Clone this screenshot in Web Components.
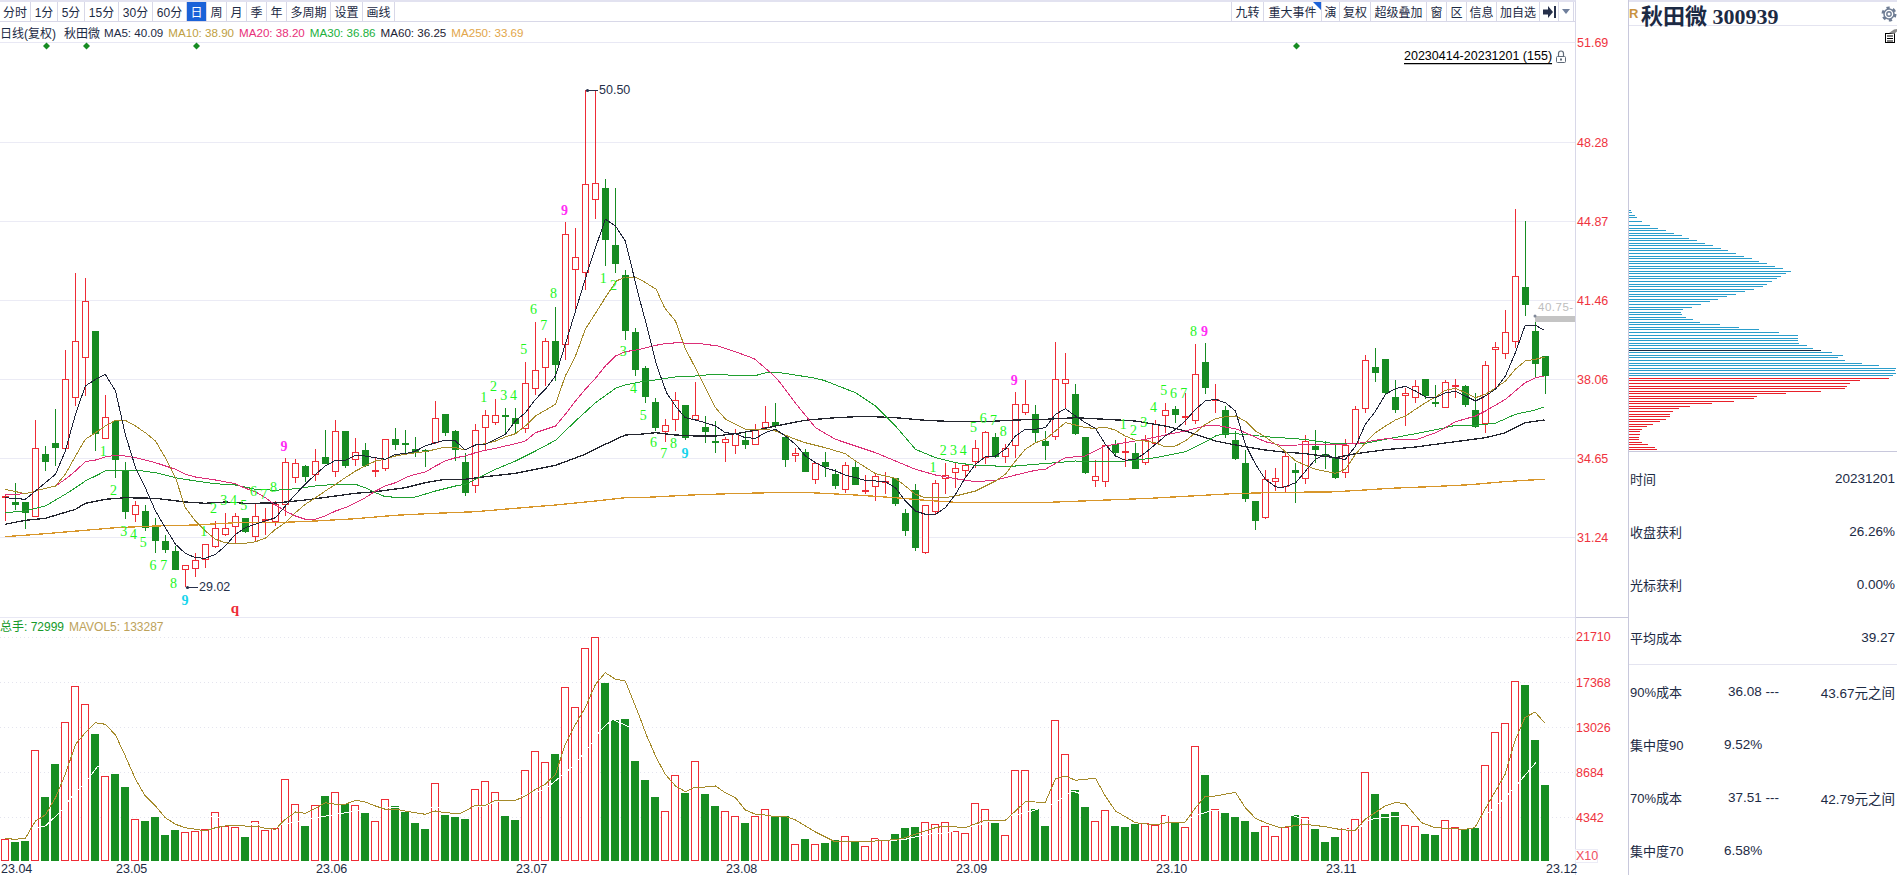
<!DOCTYPE html>
<html lang="zh">
<head>
<meta charset="utf-8">
<title>秋田微 300939</title>
<style>
    html, body { margin: 0; background: #ffffff; overflow: hidden; }
</style>
</head>
<body>
<kline-app></kline-app>

<script>
// coordinates below were read off the reference crops: [x0, y0, x scale], y scale is always 3
const Z1 = [0, 0, 2.45], Z3 = [0, 300, 2.45], Z4 = [640, 80, 2.45], Z5 = [640, 320, 2.45], Z6 = [1280, 180, 2.541];
const Z8 = [0, 610, 2.45], Z9 = [640, 610, 2.45], Z7 = [1280, 500, 2.541];

function zp(z, arr) {
    const out = [];
    for (let i = 0; i < arr.length; i += 2) {
        out.push([z[0] + arr[i] / z[2], z[1] + arr[i + 1] / 3]);
    }
    return out;
}
function line(pts, cls) {
    return `<polyline class="${cls}" points="${pts.map(p => p[0].toFixed(1) + ',' + p[1].toFixed(1)).join(' ')}"/>`;
}

// colour high top bottom low, one candle per day, x = 5 + 10 * index
const CANDLES = `r493,495,497,520 g482,501,504,509 g501,501,512,528 r419,447,516,516 g445,453,461,470 g408,442,447,465 r349,378,448,449 r272,340,397,405 r277,300,357,395 g330,330,433,450
r394,416,438,438 g420,420,459,477 g461,469,511,518 r500,504,514,521 g504,510,527,530 g517,526,540,552 g534,540,549,552 g545,550,569,569 r564,564,569,586 r552,559,568,576
r543,543,559,567 r520,527,546,547 r512,527,534,535 r512,515,526,542 g517,517,531,532 r503,515,536,540 r507,518,520,534 r500,503,521,525 r457,461,504,515 r458,462,477,482
g464,465,476,481 r448,460,474,480 g429,456,463,463 r419,430,471,476 g430,430,465,467 r437,451,459,465 g442,449,465,466 r457,469,470,476 r438,438,468,470 g427,438,444,449
g429,442,443,454 g436,448,452,456 g448,449,450,466 r400,417,442,443 g413,413,432,435 g429,430,449,460 g452,461,492,495 r423,429,485,492 r409,414,427,450 r398,414,422,424
g407,414,415,432 g407,417,423,432 r361,382,428,432 r321,369,388,394 r337,340,367,385 g306,340,364,380 r221,233,344,359 r227,256,269,308 r89,183,272,289 r89,182,199,218
g178,187,239,265 g187,244,263,272 g269,274,330,339 g327,331,369,375 g365,367,396,402 g397,401,427,430 r418,424,431,441 r391,399,419,430 g404,404,437,439 r381,414,419,419
g415,426,431,442 g420,440,442,452 r436,438,442,461 r428,432,445,453 g430,439,444,448 r423,428,444,444 r405,421,427,428 g402,421,425,427 g435,436,459,466 r447,452,455,461
g448,451,471,471 r462,462,479,483 g451,461,466,476 g468,473,485,488 r461,464,489,492 g460,466,484,484 r474,489,490,493 r473,475,486,500 r471,480,481,493 g477,477,503,505
g508,512,530,535 g483,489,547,550 r504,504,552,553 r479,482,511,513 r462,474,478,493 r462,467,472,487 r463,464,470,477 r439,447,461,467 r430,431,457,463 g432,436,456,457
r443,447,456,462 r391,403,445,457 r379,403,412,414 g404,413,432,442 g430,440,445,459 r341,378,436,439 r352,378,383,407 g383,393,433,434 g436,436,472,473 r459,475,480,486
r444,444,481,486 g439,443,452,455 r437,450,451,466 g442,452,468,468 r434,439,462,464 r419,423,443,444 r402,409,415,432 g405,408,414,422 r392,415,416,424 r343,373,420,423
g342,361,387,393 r383,398,400,412 g405,409,434,437 g430,439,458,459 g449,462,498,501 g500,500,520,529 r469,478,517,518 r467,477,481,490 r450,455,486,492 g462,469,472,502
r434,440,478,483 g429,445,449,462 g440,453,454,468 g443,457,477,478 r438,444,472,477 r405,408,443,444 r354,359,408,412 g347,366,372,381 g358,358,392,393 g379,396,409,412
r387,392,395,425 r379,385,397,402 g378,378,395,398 g384,401,403,406 r379,381,407,407 r378,384,386,397 g384,385,404,406 g392,409,426,427 r360,364,423,432 r341,346,349,388
r309,331,353,358 r208,275,341,347 g220,286,304,315 g315,330,363,377 g355,355,375,393`;

// volume bar tops as read in the crops
const VOL_A = `r685 g693 g690 r418 g558 g459 r334 r226 r280 g369 r496 g489 g528 r625 g630 g618 g672 g657 r664 r661 r655 r604 r645 r649 g678 r631 r658 r650 r505 r580 g645 r583 g555 r544 g580 r583 g606 r631 r565 g585 g603 g636 g654 r517 g612 g618 g624 r535 r511 r544 g615 g627 r478 r421 r454 g429 r229 r289 r112 r79 g216 g327 g324 g450
g507 g558 r601 r493 g546 r451 g549 g585 r601 r616 g636 r616 r595 g616 g616 r700 g684 r700 g696 g688 r676 g692 r706 r682 r688 g669 g651 g648 r634 r640 r634 r661 r667 r577 r595 g636 r673 r478 r478 g594 g645 r328 r430 g537 g588 r631 r598 g645 g648 g639 r636 r642 r613 g635 r649 r406 g492 r595 g606 g618 g630 g663 r646 r676`;
const VOL_B = `r979 g942 r949 g984 g1023 g1008 r982 r955 r814 g879 g939 g933 r973 r976 g999 g1002 r958 r979 g985 g981 r793 r694 r667 r541 g552 g717 g852`;

const MA = {
    ma5: [...zp(Z3, [12,590,62,595,87,570,136,520,160,450,185,340,209,255,234,235,258,220,283,270,307,400,332,500,356,560,381,630,405,680,430,730,454,757,479,770,503,772,528,760,552,735,577,700,601,680,626,670,650,660,675,650,699,615,724,580,748,550,773,520,797,495,822,478,846,478,871,463,895,465,920,470,944,475,969,460,993,458,1018,450,1042,435,1067,425,1091,418,1116,420,1140,447,1165,432,1189,430,1214,415,1238,400,1263,360,1287,335,1312,295,1336,265,1361,225,1385,130,1410,30]),
        ...zp(Z1, [1445,790,1483,655,1508,675,1532,720,1567,895]),
        ...zp(Z5, [18,20,40,130,65,215,90,260,111,290,136,297,160,305,185,315,209,335,234,338,258,350,283,352,307,335,332,325,356,345,381,370,405,405,430,425,454,440,479,450,503,462,528,470,552,478,577,480,601,482,626,500,650,540,675,570,699,580,724,580,748,560,773,520,797,470,822,430,846,408,871,405,895,385,920,345,944,325,969,325,993,320,1018,280,1042,263,1067,285,1091,305,1116,322,1140,370,1165,405,1189,418,1214,415,1238,395,1263,370,1287,345,1312,325,1336,300,1361,265,1385,240,1410,235,1434,245,1459,270,1483,370,1508,430,1532,475,1557,497,1568,500]),
        ...zp(Z6, [14,917,40,905,65,870,90,835,115,820,141,832,166,835,192,795,217,730,243,690,268,640,293,623,319,616,344,630,370,648,395,650,420,636,446,631,471,645,497,660,522,645,547,625,573,585,598,515,623,433,649,433,672,448])],
    ma10: [...zp(Z3, [12,565,62,578,87,570,136,555,160,520,185,465,209,415,234,395,258,375,283,358,307,358,332,375,356,395,381,420,405,470,430,530,454,620,479,660,503,690,528,715,552,725,577,728,601,727,626,722,650,712,675,685,699,665,724,635,748,610,773,590,797,570,822,550,846,530,871,510,895,495,920,480,944,475,969,465,993,460,1018,455,1042,452,1067,445,1091,438,1116,440,1140,447,1165,432,1189,428,1214,420,1238,408,1263,398,1287,375,1312,345,1361,310,1385,225,1410,165,1434,85,1478,0]),
        ...zp(Z1, [1480,895,1510,840,1532,828,1560,830]),
        ...zp(Z4, [0,595,40,625,60,680,87,720]),
        ...zp(Z5, [110,80,148,170,185,260,210,295,258,325,307,325,332,330,381,355,405,365,454,380,503,398,528,420,577,458,626,472,650,495,675,520,699,530,724,530,748,530,773,525,822,510,871,480,895,460,920,420,944,385,969,365,993,355,1018,330,1042,305,1067,312,1091,320,1116,322,1140,318,1165,328,1189,345,1214,358,1238,360,1263,365,1287,378,1312,375,1336,360,1361,335,1385,310,1410,293,1434,287,1459,285,1483,300,1508,330,1532,348,1557,370,1568,378]),
        ...zp(Z6, [40,840,90,865,141,877,166,865,192,820,217,785,243,755,268,735,293,717,319,705,344,685,370,665,395,648,420,628,446,622,471,635,497,650,522,640,547,622,573,600,598,565,623,540,649,535,672,528])],
    ma20: [...zp(Z3, [12,582,62,578,87,570,136,555,160,535,185,510,209,482,234,477,258,468,283,463,307,465,332,470,381,485,430,505,454,520,479,528,528,537,577,548,601,562,626,572,650,590,675,612,699,630,724,645,748,655,773,655,797,645,822,630,846,620,871,605,895,590,920,570,944,555,969,545,993,530,1018,520,1042,513,1067,495,1091,480,1116,470,1140,465,1165,455,1189,448,1214,442,1238,435,1263,428,1287,420,1312,395,1361,375,1385,340,1410,300,1434,265,1459,232,1483,195,1508,165,1532,152,1568,145]),
        ...zp(Z4, [50,790,90,785,150,788,190,795,240,815,280,833,320,875,338,897]),
        ...zp(Z5, [380,245,430,320,479,355,528,375,577,395,626,420,675,445,724,462,773,473,822,482,871,478,920,462,969,448,993,445,1042,410,1091,405,1140,375,1189,365,1238,355,1287,342,1336,330,1385,315,1410,313,1459,323,1483,335,1532,362,1568,373]),
        ...zp(Z6, [150,790,192,788,243,778,268,773,344,777,395,755,420,740,446,722,497,705,522,690,573,655,598,630,623,605,649,590,672,585])],
    ma30: [...zp(Z3, [12,635,62,630,111,615,160,580,185,560,209,540,234,525,258,510,283,507,332,507,381,515,430,530,479,540,528,548,577,552,626,565,675,568,724,563,773,555,822,550,871,550,895,560,920,575,944,587,993,590,1018,588,1067,570,1116,555,1140,550,1165,535,1214,505,1263,480,1312,450,1361,418,1410,360,1459,305,1508,262,1532,252,1568,243]),
        ...zp(Z4, [50,895,85,888,120,887,148,883,195,880,225,883,285,883,310,875,330,873,370,880,400,886,430,892,450,898]),
        ...zp(Z5, [528,215,577,255,626,315,675,385,724,410,773,425,822,433,871,435,920,435,969,430,1018,425,1067,420,1116,422,1165,422,1214,418,1263,410,1336,392,1385,363,1410,345,1434,337,1483,340,1532,347,1568,350]),
        ...zp(Z6, [60,775,141,788,217,787,268,775,344,758,420,740,446,733,497,733,547,727,598,700,649,687,672,677])],
    ma60: [...zp(Z3, [12,670,62,658,111,652,185,625,209,607,258,595,307,590,381,592,454,603,503,607,552,603,601,607,675,606,748,597,822,585,871,577,920,572,993,560,1042,545,1091,535,1140,535,1189,527,1263,517,1361,493,1434,460,1483,430,1532,402,1568,400]),
        ...zp(Z5, [38,335,87,342,136,345,185,345,234,338,283,328,332,315,405,298,479,290,552,286,626,290,699,298,773,302,846,302,920,297,993,295,1067,290,1140,295,1214,300,1287,315,1336,330,1410,360,1459,372,1532,387,1568,392]),
        ...zp(Z6, [65,818,141,830,192,818,268,806,344,798,420,786,522,770,573,755,623,725,672,717])],
    ma250: [...zp(Z3, [12,707,111,698,209,688,283,680,381,675,479,672,577,665,675,665,773,660,871,653,969,643,1067,637,1165,632,1263,622,1361,612,1459,600,1532,590,1568,590]),
        ...zp(Z5, [124,522,220,518,320,515,420,515,528,522,626,530,699,538,773,544,1003,544,1127,538,1250,532,1350,525,1450,518,1568,514]),
        ...zp(Z6, [127,933,203,928,280,922,380,917,483,911,560,903,623,898,672,895])]
};

const MAVOL = [...zp(Z8, [12,682,35,685,62,682,87,630,111,612,136,560,160,490,185,400,209,365,234,335,258,340,283,372,307,435,332,505,356,555,381,585,405,620,430,640,454,650,479,655,503,660,528,650,552,645,577,643,601,645,626,645,650,652,675,655,699,625,724,603,748,607,773,592,797,575,822,580,846,580,871,568,895,573,920,585,944,595,969,595,993,600,1018,605,1042,610,1067,600,1091,605,1127,608,1165,583,1189,583,1214,568,1263,568,1287,555,1312,535,1336,520,1361,490,1385,400,1410,340,1434,290,1459,220,1483,185,1508,205,1532,210,1568,320]),
    ...zp(Z9, [15,370,40,440,62,490,87,525,111,542,136,528,160,528,185,525,209,545,234,560,258,597,283,610,307,612,332,617,356,616,381,627,430,663,479,693,503,691,552,691,577,690,601,688,626,686,650,680,699,660,724,650,748,645,797,650,822,638,846,628,895,628,920,600,944,572,993,574,1018,503,1042,495,1067,508,1116,502,1140,555,1165,600,1214,635,1263,642,1287,636,1336,633,1361,590,1385,556,1410,555,1459,544,1483,590,1508,622,1532,635,1568,650]),
    ...zp(Z7, [64,970,115,977,150,985,190,990,216,955,267,915,292,905,318,907,360,965,394,980,470,985,495,980,521,925,572,820,597,720,622,650,648,633,672,665])];

// white MAVOL10 line, only visible where it crosses a bar
const MAVOL10 = [...zp(Z8, [87,650,111,645,150,600,175,558,209,515,240,465,272,470,400,590,620,640,690,640,800,615,920,590,1165,590,1336,535,1370,500,1400,470,1445,405,1470,360,1500,325]),
    ...zp(Z9, [600,690,650,685,700,670,750,665,820,645,890,620,960,600,1010,580,1060,540,1200,600,1350,620,1400,598]),
    ...zp(Z7, [20,940,50,950,190,990,230,955,300,945,521,945,572,890,610,840,650,785])];

// turn-count digits over the candles: text, zoomed x, zoomed y, class
const TD = [
    [Z3, [['1',253,450],['2',278,568],['3',303,690],['4',327,700],['5',351,725],['6',375,793],['7',401,792],['8',425,847],['9',453,897,'c'],
          ['1',499,690],['2',523,622],['3',548,597],['4',572,597],['5',597,612],['6',621,570],['7',646,580],['8',670,560],['9',696,436,'m'],
          ['1',1185,288],['2',1209,255],['3',1234,283],['4',1258,283],['5',1283,144],['6',1307,24],['7',1332,72],['3',1527,152],['4',1552,262]]],
    [Z1, [['8',1356,878],['9',1383,628,'m'],['1',1478,831],['2',1503,852]]],
    [Z5, [['5',8,282],['6',33,363],['7',58,398],['8',82,367],['9',110,398,'c'],['1',718,438],['2',743,388],['3',768,388],['4',792,388],['5',817,318],['6',841,292],['7',866,297],['8',890,330],['9',917,178,'m'],
          ['1',1184,310],['2',1209,327],['3',1234,303],['4',1258,260],['5',1283,207],['6',1307,217],['7',1332,217],['8',1356,30],['9',1383,30,'m']]]
];

// chip distribution rows: zoomed y, zoomed right end
const CHIPS = [91,888,97,892,104,898,111,905,122,918,136,938,145,958,151,978,160,998,166,1018,175,1037,181,1057,189,1078,196,1098,204,1118,211,1136,220,1156,229,1177,235,1197,244,1215,250,1235,259,1255,265,1276,273,1296,280,1283,288,1271,295,1261,303,1248,312,1235,318,1225,327,1202,334,1178,343,1156,349,1133,357,1111,364,1090,373,1067,382,1044,388,1022,397,1017,403,1019,411,1029,418,1047,427,1065,433,1116,441,1164,448,1215,456,1266,465,1314,473,1314,480,1314,488,1315,495,1337,503,1352,511,1372,517,1400,525,1428,531,1414,540,1433,549,1477,556,1520,564,1563,571,1560,579,1563,586,1555,594,1545,601,1471,610,1446,618,1437,625,1433,633,1372,640,1283,648,1210,655,1202,663,1151,670,1095,678,1039,685,1011,693,996,702,987,708,989,717,978,724,963,732,945,739,930,747,917,754,911,762,911,770,910,777,910,786,917,793,933,801,950,808,956];

class ToolBtn extends HTMLElement {
    constructor() {
        super();
        this.shadow = this.attachShadow({mode: 'open'});
    }

    connectedCallback() {
        this.shadow.innerHTML = `
        <style>
        :host {
            display: flex;
            align-items: center;
            justify-content: center;
            position: relative;
            box-sizing: border-box;
            width: var(--w);
            height: 19px;
            border-right: 1px solid #d8d8e8;
            color: #1c2a44;
            font-size: 12px;
            white-space: nowrap;
        }
        :host([active]) {
            background: #1b62d8;
            color: #ffffff;
        }
        :host([flag])::after {
            content: "";
            position: absolute;
            top: 0;
            right: 0;
            width: 8px;
            height: 8px;
            background: #1b62d8;
            clip-path: polygon(0 0, 100% 0, 100% 100%);
        }
        </style>
        <slot></slot>`;
    }
}

class KlineToolbar extends HTMLElement {
    constructor() {
        super();
        this.shadow = this.attachShadow({mode: 'open'});
    }

    connectedCallback() {
        const left = [['分时',31],['1分',27],['5分',27],['15分',34],['30分',34],['60分',34],['日',20],['周',20],['月',20],['季',20],['年',20],['多周期',44],['设置',32],['画线',32]];
        const right = [['九转',32],['重大事件',58],['演',18],['复权',31],['超级叠加',56],['窗',20],['区',20],['信息',30],['加自选',43]];
        this.shadow.innerHTML = `
        <style>
        :host {
            display: flex;
            justify-content: space-between;
            box-sizing: border-box;
            height: 22px;
            width: 1576px;
            padding: 0 1px 0 0;
            border-top: 2px solid #e2e2f0;
            border-bottom: 1px solid #d8d8e8;
            border-right: 1px solid #d8d8e8;
            font-family: "Liberation Sans", "Noto Sans CJK SC", sans-serif;
        }
        .group { display: flex; }
        .right { border-left: 1px solid #d8d8e8; }
        </style>
        <div class="group">
            ${left.map(b => `<tool-btn style="--w:${b[1]}px"${b[0] === '日' ? ' active' : ''}>${b[0]}</tool-btn>`).join('')}
        </div>
        <div class="group right">
            ${right.map(b => `<tool-btn style="--w:${b[1]}px"${b[0] === '重大事件' ? ' flag' : ''}>${b[0]}</tool-btn>`).join('')}
            <tool-btn style="--w:19px">
                <svg width="13" height="12" viewBox="0 0 13 12"><path d="M0 3.500h5V0l5 6-5 6V8.500H0z" fill="#26304a"/><rect x="11" y="0" width="2" height="12" fill="#26304a"/></svg>
            </tool-btn>
            <tool-btn style="--w:15px">
                <svg width="8" height="5" viewBox="0 0 8 5"><path d="M0 0h8L4 5z" fill="#6f7f9c"/></svg>
            </tool-btn>
        </div>`;
    }
}

class MaLegend extends HTMLElement {
    constructor() {
        super();
        this.shadow = this.attachShadow({mode: 'open'});
    }

    connectedCallback() {
        this.shadow.innerHTML = `
        <style>
        :host {
            display: flex;
            align-items: center;
            box-sizing: border-box;
            height: 21px;
            width: 1576px;
            border-bottom: 1px solid #e8e8f4;
            border-right: 1px solid #d8d8e8;
            font: 12px "Liberation Sans", "Noto Sans CJK SC", sans-serif;
            color: #1c2a44;
            white-space: nowrap;
        }
        span { margin-right: 5px; }
        .name { margin-right: 8px; }
        .ma { font-size: 11.6px; }
        </style>
        <span class="name">日线(复权)</span>
        <span style="margin-right:4px">秋田微</span>
        <span class="ma" style="color:#1c2a44">MA5: 40.09</span>
        <span class="ma" style="color:#c0a042">MA10: 38.90</span>
        <span class="ma" style="color:#e8307a">MA20: 38.20</span>
        <span class="ma" style="color:#22b03c">MA30: 36.86</span>
        <span class="ma" style="color:#1c2233">MA60: 36.25</span>
        <span class="ma" style="color:#e2a64a">MA250: 33.69</span>`;
    }
}

class PricePane extends HTMLElement {
    constructor() {
        super();
        this.shadow = this.attachShadow({mode: 'open'});
    }

    connectedCallback() {
        this.render();
    }

    render() {
        const grid = [[42, '51.69'], [141.5, '48.28'], [220.5, '44.87'], [299.5, '41.46'], [378.5, '38.06'], [457.5, '34.65'], [536.5, '31.24']];
        const bodies = CANDLES.trim().split(/\s+/).map((s, i) => {
            const c = s[0];
            const [h, t, b, l] = s.slice(1).split(',').map(Number);
            const x = 5 + 10 * i;
            if (c === 'g') {
                return `<rect class="gf" x="${x}" y="${h}" width="1" height="${l - h}"/>` +
                    `<rect class="gf" x="${x - 3}" y="${t}" width="7" height="${Math.max(b - t, 2)}"/>`;
            }
            return `<rect class="rf" x="${x}" y="${h}" width="1" height="${t - h}"/>` +
                `<rect class="rf" x="${x}" y="${b}" width="1" height="${l - b}"/>` +
                `<rect class="rb" x="${x - 2.5}" y="${t + .5}" width="6" height="${Math.max(b - t - 1, 1)}"/>`;
        }).join('');
        const digits = TD.map(([z, items]) => items.map(d => {
            const p = zp(z, [d[1], d[2]])[0];
            return `<text class="td ${d[3] || ''}" x="${p[0].toFixed(1)}" y="${p[1].toFixed(1)}">${d[0]}</text>`;
        }).join('')).join('');
        const diamonds = [46.5, 86.5, 196.5, 1296.5].map(x =>
            `<polygon class="dia" points="${x},41.5 ${x + 1.5},43 ${x + 3.5},45 ${x + 1.5},47 ${x},48.5 ${x - 1.5},47 ${x - 3.5},45 ${x - 1.5},43"/>`).join('');

        this.shadow.innerHTML = `
        <style>
        :host {
            display: block;
            height: 574px;
            width: 1628px;
        }
        svg { display: block; overflow: visible; }
        text { font-family: "Liberation Sans", sans-serif; }
        .grid { stroke: #ebebf5; stroke-width: 1; shape-rendering: crispEdges; }
        .axis { stroke: #d8d8e8; stroke-width: 1; shape-rendering: crispEdges; }
        .price { fill: #ef3340; font-size: 12.5px; }
        .gf { fill: #178c22; shape-rendering: crispEdges; }
        .rf { fill: #ee2c36; shape-rendering: crispEdges; }
        .rb { fill: #ffffff; stroke: #ee2c36; stroke-width: 1; shape-rendering: crispEdges; }
        polyline { fill: none; stroke-width: 1; shape-rendering: crispEdges; }
        .ma5 { stroke: #1f2438; }
        .ma10 { stroke: #a58a2a; }
        .ma20 { stroke: #dc2f78; }
        .ma30 { stroke: #20a030; }
        .ma60 { stroke: #23252e; stroke-width: 1.3; }
        .ma250 { stroke: #d8962a; stroke-width: 1.3; }
        .td { font-family: "Liberation Serif", serif; font-size: 14px; fill: #1ef51e; text-anchor: middle; dominant-baseline: central; }
        .td.m { fill: #ff2cf4; font-weight: bold; }
        .td.c { fill: #18d4ec; font-weight: bold; }
        .q { font-family: "Liberation Serif", serif; font-size: 15px; font-weight: bold; fill: #ee2c36; text-anchor: middle; dominant-baseline: central; }
        .mark { fill: #26304a; font-size: 12.5px; dominant-baseline: central; }
        .mline { stroke: #26304a; stroke-width: 1; shape-rendering: crispEdges; }
        .range { fill: #000000; font-size: 12.5px; text-decoration: underline; dominant-baseline: central; }
        .dia { fill: #178c22; }
        .last { fill: #bdbdbd; font-size: 11.5px; letter-spacing: .5px; dominant-baseline: central; }
        </style>
        <svg width="1628" height="574" viewBox="0 42 1628 574">
            ${grid.slice(1).map(g => `<line class="grid" x1="0" x2="1575" y1="${g[0]}" y2="${g[0]}"/>`).join('')}
            <line class="axis" x1="1575.5" x2="1575.5" y1="42" y2="616"/>
            ${grid.map(g => `<text class="price" x="1577" y="${g[0] + 4}">${g[1]}</text>`).join('')}
            ${bodies}
            ${line(MA.ma250, 'ma250')}
            ${line(MA.ma60, 'ma60')}
            ${line(MA.ma30, 'ma30')}
            ${line(MA.ma20, 'ma20')}
            ${line(MA.ma10, 'ma10')}
            ${line(MA.ma5, 'ma5')}
            ${digits}
            <text class="q" x="235" y="607">q</text>
            ${diamonds}
            <line class="mline" x1="587" x2="598" y1="89.5" y2="89.5"/>
            <circle cx="587.5" cy="89.5" r="1.6" fill="#26304a"/>
            <text class="mark" x="599" y="88.5">50.50</text>
            <line class="mline" x1="187" x2="198" y1="586.5" y2="586.5"/>
            <circle cx="187.5" cy="586.5" r="1.6" fill="#26304a"/>
            <text class="mark" x="199" y="585.5">29.02</text>
            <text class="range" x="1404" y="55">20230414-20231201 (155)</text>
            <path d="M1558.500 55v-2.500a2.500 2.500 0 0 1 5 0V55" fill="none" stroke="#5f6a78" stroke-width="1.200"/>
            <rect x="1556.500" y="55.500" width="9" height="6" rx="1" fill="none" stroke="#5f6a78"/>
            <rect x="1560" y="57.500" width="2" height="2" fill="#5f6a78"/>
            <rect x="1535" y="315" width="40" height="6" fill="#c4c4c4"/>
            <circle cx="1535" cy="315" r="1.500" fill="#808898"/>
            <text class="last" x="1538" y="305.500">40.75-</text>
        </svg>`;
    }
}

class VolumePane extends HTMLElement {
    constructor() {
        super();
        this.shadow = this.attachShadow({mode: 'open'});
    }

    connectedCallback() {
        this.render();
    }

    render() {
        const rows = [[636, '21710'], [681.5, '17368'], [726.5, '13026'], [771.5, '8684'], [816.5, '4342']];
        const dates = [[1, '23.04'], [116, '23.05'], [316, '23.06'], [516, '23.07'], [726, '23.08'], [956, '23.09'], [1156, '23.10'], [1326, '23.11'], [1546, '23.12']];
        const tops = [
            ...VOL_A.trim().split(/\s+/).map(s => [s[0], 610 + Number(s.slice(1)) / 3]),
            ...VOL_B.trim().split(/\s+/).map(s => [s[0], 500 + Number(s.slice(1)) / 3])
        ];
        const bars = tops.map((b, i) => {
            const t = Math.round(b[1]);
            if (b[0] === 'g') {
                return `<rect class="gb" x="${1 + 10 * i}" y="${t}" width="8" height="${860 - t}"/>`;
            }
            return `<rect class="rb" x="${1.5 + 10 * i}" y="${t + .5}" width="7" height="${859 - t}"/>`;
        }).join('');

        this.shadow.innerHTML = `
        <style>
        :host {
            display: block;
            height: 259px;
            width: 1628px;
        }
        svg { display: block; }
        text { font-family: "Liberation Sans", "Noto Sans CJK SC", sans-serif; }
        .sep { stroke: #e8e8f4; shape-rendering: crispEdges; }
        .sep2 { stroke: #c8c8dc; shape-rendering: crispEdges; }
        .axis { stroke: #d8d8e8; shape-rendering: crispEdges; }
        .dot { stroke: #e4e4ee; stroke-dasharray: 1 3; shape-rendering: crispEdges; }
        .vol { fill: #ef3340; font-size: 12.5px; }
        .gb { fill: #188e22; shape-rendering: crispEdges; }
        .rb { fill: #ffffff; stroke: #ee2c36; stroke-width: 1; shape-rendering: crispEdges; }
        polyline { fill: none; stroke-width: 1; shape-rendering: crispEdges; }
        .mavol { stroke: #a58a2a; }
        .mavol10 { stroke: #ffffff; }
        .date { fill: #1c2a44; font-size: 12.5px; }
        .h1 { fill: #169a2a; font-size: 12px; }
        .h2 { fill: #bda25a; font-size: 12px; }
        .x10 { fill: #ef5060; font-size: 12.5px; }
        .x10box { fill: none; stroke: #ececf6; shape-rendering: crispEdges; }
        </style>
        <svg width="1628" height="259" viewBox="0 616 1628 259">
            <line class="sep" x1="0" x2="1575" y1="616" y2="616"/>
            <line class="sep2" x1="1575" x2="1628" y1="616" y2="616"/>
            <line class="axis" x1="1575.5" x2="1575.5" y1="616" y2="875"/>
            ${rows.map(r => `<line class="dot" x1="0" x2="1575" y1="${r[0]}" y2="${r[0]}"/>`).join('')}
            ${rows.map(r => `<text class="vol" x="1576" y="${r[0] + 4}">${r[1]}</text>`).join('')}
            <rect class="x10box" x="1575.5" y="848.5" width="22" height="13"/>
            <text class="x10" x="1576" y="859">X10</text>
            <text class="h1" x="0" y="629.5">总手: 72999</text>
            <text class="h2" x="69" y="629.5">MAVOL5: 133287</text>
            ${bars}
            ${line(MAVOL10, 'mavol10')}
            ${line(MAVOL, 'mavol')}
            ${dates.map(d => `<text class="date" x="${d[0]}" y="872">${d[1]}</text>`).join('')}
        </svg>`;
    }
}

class ChipProfile extends HTMLElement {
    constructor() {
        super();
        this.shadow = this.attachShadow({mode: 'open'});
    }

    connectedCallback() {
        let bars = '';
        for (let i = 0; i < CHIPS.length; i += 2) {
            const y = Math.round(180 + CHIPS[i] / 3);
            const w = (CHIPS[i + 1] - 884) / 2.541;
            const cls = CHIPS[i] === 511 ? 'now' : CHIPS[i] < 590 ? 'up' : 'dn';
            bars += `<rect class="${cls}" x="1628" y="${y}" width="${w.toFixed(1)}" height="1"/>`;
        }
        this.shadow.innerHTML = `
        <style>
        :host {
            display: block;
            height: 426px;
            box-sizing: border-box;
            border-bottom: 1px solid #c8c8dc;
        }
        svg { display: block; }
        rect { shape-rendering: crispEdges; }
        .up { fill: #2a9dcb; }
        .dn { fill: #e8202a; }
        .now { fill: #1c2a44; }
        </style>
        <svg width="268" height="425" viewBox="1628 26 268 425">
            ${bars}
            <g transform="translate(1884 29)">
                <rect x="0.5" y="4.500" width="9" height="9" fill="#ffffff" stroke="#000000"/>
                <path d="M2 7h6M2 9.500h6M2 12h6" stroke="#000000" fill="none"/>
                <path d="M4 4L9 0.500 12 0v2.500L9 5z" fill="#8c8c8c"/>
            </g>
        </svg>`;
    }
}

class InfoRow extends HTMLElement {
    constructor() {
        super();
        this.shadow = this.attachShadow({mode: 'open'});
    }

    connectedCallback() {
        this.shadow.innerHTML = `
        <style>
        :host {
            display: grid;
            grid-template-columns: 94px 1fr auto;
            align-items: center;
            height: 53px;
            padding: 0 2px 0 1px;
            color: #1c2a44;
            font: 13.5px "Liberation Sans", "Noto Sans CJK SC", sans-serif;
            white-space: nowrap;
        }
        ::slotted([slot="label"]) { font-size: 13px; }
        </style>
        <slot name="label"></slot>
        <slot name="mid"></slot>
        <slot name="value"></slot>`;
    }
}

class ChipPanel extends HTMLElement {
    constructor() {
        super();
        this.shadow = this.attachShadow({mode: 'open'});
    }

    connectedCallback() {
        const row = (a, b, c, pad) => `<info-row>
            <span slot="label">${a}</span>
            <span slot="mid" style="padding-left:${pad || 0}px">${b}</span>
            <span slot="value">${c}</span>
        </info-row>`;
        this.shadow.innerHTML = `
        <style>
        :host {
            display: block;
            box-sizing: border-box;
            height: 875px;
            border-left: 1px solid #c8c8dc;
            overflow: hidden;
        }
        .title {
            display: flex;
            align-items: center;
            height: 26px;
            box-sizing: border-box;
            border-top: 2px solid #e2e2f0;
            border-bottom: 1px solid #e4e4f0;
            font-weight: bold;
            color: #1c2a44;
            white-space: nowrap;
        }
        .r {
            font: bold 13px "Liberation Sans", sans-serif;
            color: #c9933f;
            width: 12px;
        }
        .name { font: bold 22px "Liberation Serif", "Noto Sans CJK SC", serif; flex: 1; }
        .sep { border-top: 1px solid #e4e4f0; }
        svg { display: block; flex: none; }
        </style>
        <div class="title">
            <span class="r">R</span>
            <span class="name">秋田微 300939</span>
            <svg width="16" height="16" viewBox="0 0 16 16">
                <circle cx="8" cy="8" r="5" fill="none" stroke="#6f7d94" stroke-width="1.500"/>
                <circle cx="8" cy="8" r="6.300" fill="none" stroke="#6f7d94" stroke-width="2.400" stroke-dasharray="3.200 3.400"/>
                <circle cx="8" cy="8" r="2.200" fill="none" stroke="#6f7d94" stroke-width="1.400"/>
            </svg>
        </div>
        <chip-profile></chip-profile>
        ${row('时间', '', '20231201')}
        ${row('收盘获利', '', '26.26%')}
        ${row('光标获利', '', '0.00%')}
        ${row('平均成本', '', '39.27')}
        <div class="sep"></div>
        ${row('90%成本', '36.08 ---', '43.67元之间', 4)}
        ${row('集中度90', '9.52%', '')}
        ${row('70%成本', '37.51 ---', '42.79元之间', 4)}
        ${row('集中度70', '6.58%', '')}`;
    }
}

class KlineApp extends HTMLElement {
    constructor() {
        super();
        this.shadow = this.attachShadow({mode: 'open'});
    }

    connectedCallback() {
        this.shadow.innerHTML = `
        <style>
        :host {
            display: grid;
            grid-template-columns: 1628px 269px;
            width: 1897px;
            height: 875px;
            overflow: hidden;
        }
        .left { display: flex; flex-direction: column; }
        </style>
        <div class="left">
            <kline-toolbar></kline-toolbar>
            <ma-legend></ma-legend>
            <price-pane></price-pane>
            <volume-pane></volume-pane>
        </div>
        <chip-panel></chip-panel>`;
    }
}

customElements.define('tool-btn', ToolBtn);
customElements.define('kline-toolbar', KlineToolbar);
customElements.define('ma-legend', MaLegend);
customElements.define('price-pane', PricePane);
customElements.define('volume-pane', VolumePane);
customElements.define('chip-profile', ChipProfile);
customElements.define('info-row', InfoRow);
customElements.define('chip-panel', ChipPanel);
customElements.define('kline-app', KlineApp);
</script>
</body>
</html>
